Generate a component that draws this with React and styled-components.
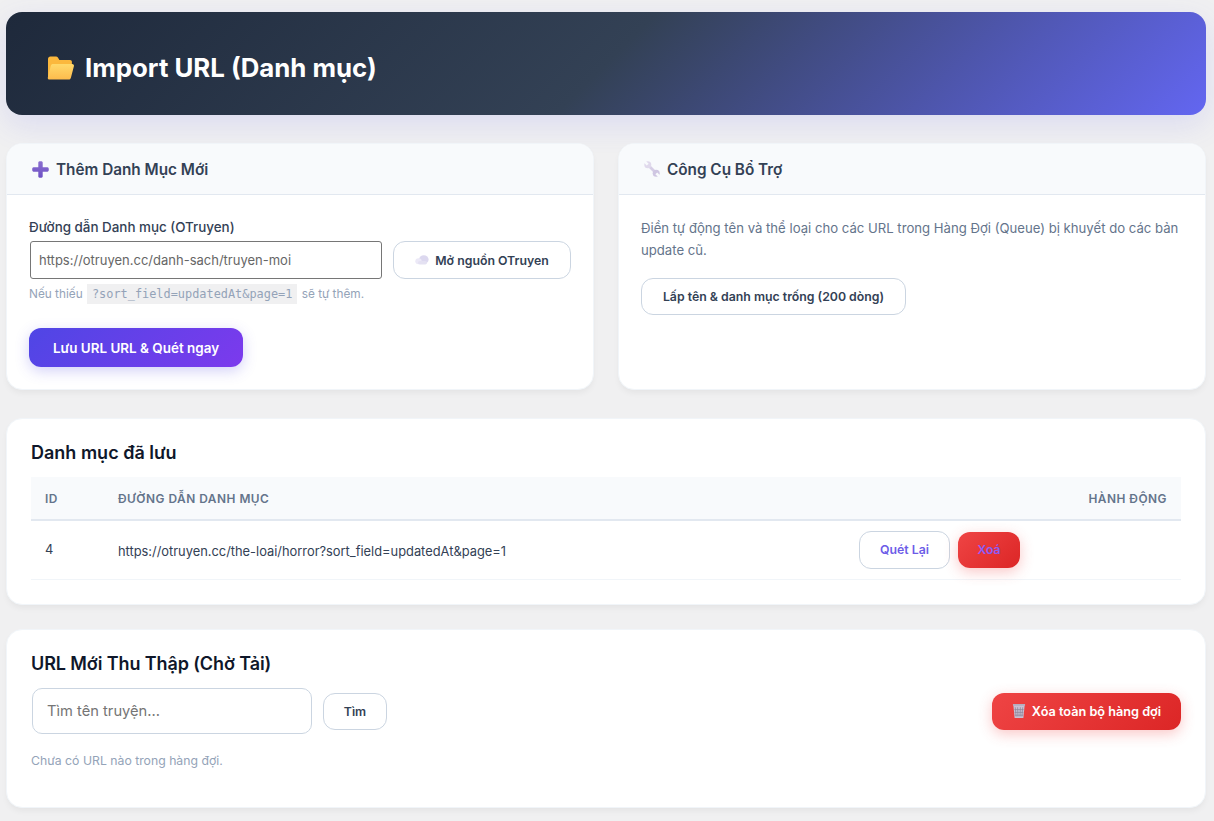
import React from "react";
import styled, { createGlobalStyle } from "styled-components";

const Global = createGlobalStyle`
  * { box-sizing: border-box; }
  html, body { margin: 0; padding: 0; background: #f0f0f1; }
  body { font-family: Inter, "Noto Sans", sans-serif; color: #1e293b; }
`;

const Page = styled.div`
  width: 1214px;
  height: 821px;
  overflow: hidden;
  padding: 12px 8px 0 6px;
  display: flex;
  flex-direction: column;
`;

const Hero = styled.header`
  height: 103px;
  flex: none;
  border-radius: 16px;
  background: linear-gradient(135deg, #1e293b 0%, #334155 50%, #6366f1 100%);
  box-shadow: 0 10px 30px rgba(99, 102, 241, 0.15);
  display: flex;
  align-items: center;
  gap: 11px;
  padding: 8px 0 0 41px;
  margin-bottom: 28px;
`;

const HeroTitle = styled.h1`
  margin: 0;
  font-size: 25.8px;
  font-weight: 700;
  line-height: 30px;
  color: #fff;
`;

const TopGrid = styled.div`
  display: grid;
  grid-template-columns: 588px 588px;
  gap: 24px;
  margin-bottom: 28px;
`;

const Card = styled.section`
  background: #fff;
  border: 1px solid #f1f5f9;
  border-radius: 16px;
  box-shadow: 0 4px 6px -1px rgba(0, 0, 0, 0.05);
  overflow: hidden;
`;

const TopCard = styled(Card)`
  height: 247px;
`;

const CardHead = styled.div`
  height: 51px;
  background: #f8fafc;
  border-bottom: 1px solid #e2e8f0;
  display: flex;
  align-items: center;
  gap: 7px;
  padding: 0 25px;
  font-size: 15.3px;
  font-weight: 600;
  color: #334155;
`;

const CardBody = styled.div`
  padding: 23px 22px 0;
`;

const FieldLabel = styled.label`
  display: block;
  font-size: 13.4px;
  font-weight: 500;
  line-height: 18px;
  color: #334155;
  margin-bottom: 5px;
`;

const FieldRow = styled.div`
  display: flex;
  align-items: center;
  gap: 11px;
`;

const UrlField = styled.input`
  width: 353px;
  height: 38px;
  margin-left: 1px;
  padding: 0 8px;
  border: 1px solid #767676;
  border-radius: 3px;
  font: 400 13px Inter, sans-serif;
  color: #666;
  outline: none;
`;

const Hint = styled.p`
  margin: 5px 0 0;
  font-size: 11.8px;
  line-height: 20px;
  color: #94a3b8;
`;

const Code = styled.code`
  font-family: "DejaVu Sans Mono", monospace;
  font-size: 11.9px;
  background: #f0f0f1;
  padding: 3px 5px;
  margin: 0 1px;
`;

const Button = styled.button`
  display: inline-flex;
  align-items: center;
  justify-content: center;
  gap: 6px;
  flex: none;
  height: ${(p) => p.$h || 38}px;
  width: ${(p) => p.$w}px;
  border-radius: 12px;
  font: 600 ${(p) => p.$size || 12.3}px Inter, sans-serif;
  white-space: nowrap;
  cursor: pointer;
  padding: 0;
`;

const Outline = styled(Button)`
  background: #fff;
  border: 1px solid #cbd5e1;
  color: ${(p) => p.$color || "#334155"};
`;

const Primary = styled(Button)`
  border: 0;
  color: #fff;
  background: linear-gradient(135deg, #4f46e5, #7c3aed);
  box-shadow: 0 4px 14px rgba(79, 70, 229, 0.25);
  margin-top: 24px;
`;

const Danger = styled(Button)`
  border: 0;
  color: ${(p) => p.$color || "#fff"};
  background: linear-gradient(135deg, #ef4444, #dc2626);
  box-shadow: 0 4px 14px rgba(239, 68, 68, 0.3);
`;

const Description = styled.p`
  margin: -1px 0 17px;
  font-size: 13.15px;
  line-height: 22px;
  color: #64748b;
`;

const Panel = styled(Card)`
  flex: none;
  padding: 21px 24px 0;
`;

const PanelTitle = styled.h2`
  margin: 0;
  font-size: 18px;
  font-weight: 600;
  line-height: 26px;
  color: #0f172a;
`;

const QueueTitle = styled(PanelTitle)`
  letter-spacing: -0.1px;
`;

const SavedPanel = styled(Panel)`
  height: 187px;
  margin-bottom: 24px;
`;

const QueuePanel = styled(Panel)`
  height: 179px;
`;

const Table = styled.table`
  width: 100%;
  border-collapse: collapse;
  margin-top: 11px;
  table-layout: fixed;
`;

const Th = styled.th`
  height: 43px;
  background: #f8fafc;
  border-bottom: 2px solid #e2e8f0;
  padding: 0 14px;
  text-align: ${(p) => p.$align || "left"};
  font-size: 11.9px;
  font-weight: 600;
  letter-spacing: 0.5px;
  text-transform: uppercase;
  color: #64748b;
`;

const Td = styled.td`
  height: 59px;
  padding: 0 14px;
  border-bottom: 1px solid #f1f5f9;
  font-size: 12.87px;
  color: #334155;
`;

const UrlCell = styled(Td)`
  padding-top: 3px;
`;

const Actions = styled.div`
  display: flex;
  align-items: center;
  gap: 8px;
`;

const QueueBar = styled.div`
  display: flex;
  align-items: center;
  margin-top: 11px;
  padding-left: 1px;
`;

const SearchField = styled.input`
  width: 280px;
  height: 46px;
  padding: 0 14px;
  border: 1px solid #cbd5e1;
  border-radius: 10px;
  font: 400 14.7px Inter, sans-serif;
  outline: none;
  margin-right: 11px;
  &::placeholder { color: #757575; }
`;

const Spacer = styled.div`
  flex: 1;
`;

const Empty = styled.p`
  margin: 18px 0 0;
  font-size: 12.25px;
  line-height: 18px;
  color: #94a3b8;
`;

const FolderIcon = () => (
  <svg width="27" height="24" viewBox="0 0 27 24">
    <defs>
      <linearGradient id="fg" x1="0" y1="0" x2="0" y2="1">
        <stop offset="0" stopColor="#ffd96b" />
        <stop offset="1" stopColor="#fdbb4c" />
      </linearGradient>
    </defs>
    <path d="M1 3c0-1.300 1-2.400 2.400-2.400h5.600c.8 0 1.400.4 1.900 1l1.500 2.400h10.700c1 0 1.800.8 1.800 1.800V12L4 23 1 22z" fill="#fbb83d" />
    <path d="M6 8h19.200c1.200 0 2 1.100 1.700 2.300l-3 11.400c-.3 1.200-1.200 1.900-2.400 1.900H2.600C1.300 23.600.5 22.600.9 21.300L3.800 9.700C4.100 8.700 4.900 8 6 8z" fill="url(#fg)" />
  </svg>
);

const PlusIcon = () => (
  <svg width="17" height="17" viewBox="0 0 17 17">
    <defs>
      <linearGradient id="pg" x1="0" y1="0" x2="0" y2="1">
        <stop offset="0" stopColor="#8b6fd0" />
        <stop offset="1" stopColor="#6d50c4" />
      </linearGradient>
    </defs>
    <path d="M6.300 1.500C6.300.7 7.200.2 8.500.2s2.200.5 2.200 1.300v4.800h4.800c.8 0 1.300.9 1.300 2.200s-.5 2.200-1.300 2.200h-4.800v4.800c0 .8-.9 1.300-2.200 1.300s-2.200-.5-2.200-1.300v-4.800H1.500C.7 10.700.2 9.800.2 8.500s.5-2.200 1.300-2.200h4.800z" fill="url(#pg)" />
  </svg>
);

const WrenchIcon = () => (
  <svg width="16" height="16" viewBox="0 0 16 16">
    <path d="M4 4l8 8" stroke="#d6cee6" strokeWidth="2.800" strokeLinecap="round" />
    <circle cx="3.800" cy="3.800" r="3.500" fill="#e0d9ec" />
    <circle cx="12.200" cy="12.200" r="3.500" fill="#cfc6e2" />
    <path d="M.6.6L3.700 3.700" stroke="#f8fafc" strokeWidth="2.600" />
    <path d="M15.400 15.400L12.300 12.300" stroke="#f8fafc" strokeWidth="2.600" />
  </svg>
);

const CloudIcon = () => (
  <svg width="14" height="10" viewBox="0 0 14 10">
    <ellipse cx="8.800" cy="4.500" rx="4.800" ry="4.300" fill="#dcd8ef" />
    <ellipse cx="3.500" cy="6.300" rx="3.200" ry="3" fill="#ece9f7" />
    <rect x="3" y="6" width="9" height="3.400" rx="1.700" fill="#e4e1f2" />
  </svg>
);

const TrashIcon = () => (
  <svg width="14" height="16" viewBox="0 0 15 16">
    <path d="M1 .5h13l-.5 2-1.300 13H2.800L1.500 2.500z" fill="#c9c0d2" />
    <path d="M1 .5h13v2H1z" fill="#b5adbf" />
    <path d="M3.500 4l.9 10M6 4l.4 10M9 4l-.4 10M11.500 4l-.9 10M2.500 6.500h10M2.800 9.500h9.400M3 12.500h9" stroke="#8e8598" strokeWidth="0.8" fill="none" />
  </svg>
);

export default function App() {
  return (
    <Page>
      <Global />
      <Hero>
        <FolderIcon />
        <HeroTitle>Import URL (Danh mục)</HeroTitle>
      </Hero>

      <TopGrid>
        <TopCard>
          <CardHead>
            <PlusIcon />
            Thêm Danh Mục Mới
          </CardHead>
          <CardBody>
            <FieldLabel>Đường dẫn Danh mục (OTruyen)</FieldLabel>
            <FieldRow>
              <UrlField defaultValue="https://otruyen.cc/danh-sach/truyen-moi" />
              <Outline $w={178}>
                <CloudIcon />
                Mở nguồn OTruyen
              </Outline>
            </FieldRow>
            <Hint>
              Nếu thiếu <Code>?sort_field=updatedAt&amp;page=1</Code> sẽ tự thêm.
            </Hint>
            <Primary $w={214} $h={39} $size={13.45}>Lưu URL URL &amp; Quét ngay</Primary>
          </CardBody>
        </TopCard>

        <TopCard>
          <CardHead>
            <WrenchIcon />
            Công Cụ Bổ Trợ
          </CardHead>
          <CardBody>
            <Description>
              Điền tự động tên và thể loại cho các URL trong Hàng Đợi (Queue) bị khuyết do các bản update cũ.
            </Description>
            <Outline $w={265} $h={37}>Lấp tên &amp; danh mục trống (200 dòng)</Outline>
          </CardBody>
        </TopCard>
      </TopGrid>

      <SavedPanel>
        <PanelTitle>Danh mục đã lưu</PanelTitle>
        <Table>
          <colgroup>
            <col width="73" />
            <col width="741" />
            <col />
          </colgroup>
          <thead>
            <tr>
              <Th>ID</Th>
              <Th>Đường dẫn Danh mục</Th>
              <Th $align="right">Hành động</Th>
            </tr>
          </thead>
          <tbody>
            <tr>
              <Td>4</Td>
              <UrlCell>https://otruyen.cc/the-loai/horror?sort_field=updatedAt&amp;page=1</UrlCell>
              <Td>
                <Actions>
                  <Outline $w={91} $color="#6d5ce8">Quét Lại</Outline>
                  <Danger $w={62} $h={36} $color="#8b5cf6">Xoá</Danger>
                </Actions>
              </Td>
            </tr>
          </tbody>
        </Table>
      </SavedPanel>

      <QueuePanel>
        <QueueTitle>URL Mới Thu Thập (Chờ Tải)</QueueTitle>
        <QueueBar>
          <SearchField placeholder="Tìm tên truyện..." />
          <Outline $w={64} $h={37}>Tìm</Outline>
          <Spacer />
          <Danger $w={189} $h={37} $size={12.7}>
            <TrashIcon />
            Xóa toàn bộ hàng đợi
          </Danger>
        </QueueBar>
        <Empty>Chưa có URL nào trong hàng đợi.</Empty>
      </QueuePanel>
    </Page>
  );
}
